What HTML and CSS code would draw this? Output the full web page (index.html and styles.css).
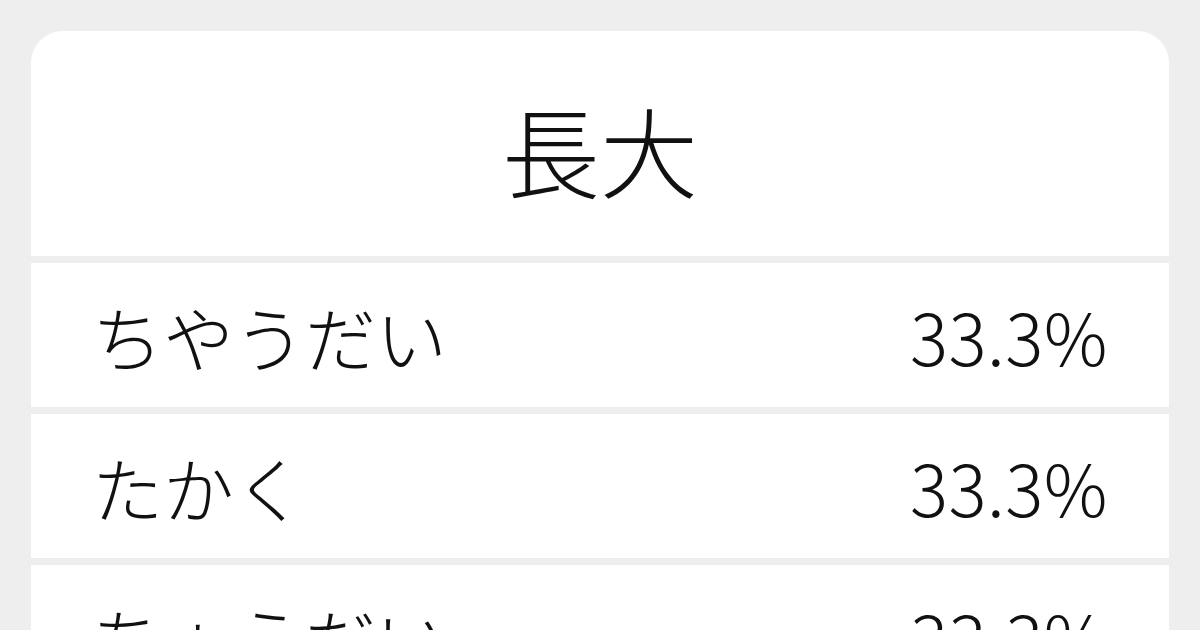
FILE: index.html
```html
<!DOCTYPE html>
<html lang="ja">
<head>
<meta charset="utf-8">
<link rel="stylesheet" href="styles.css">
</head>
<body>
<div class="card">
  <div class="title">長大</div>
  <div class="row"><span class="reading">ちやうだい</span><span class="pct">33.3%</span></div>
  <div class="row"><span class="reading">たかく</span><span class="pct">33.3%</span></div>
  <div class="row"><span class="reading">ちょうだい</span><span class="pct">33.3%</span></div>
</div>
</body>
</html>
```

FILE: styles.css
```css
html, body {
  margin: 0;
  padding: 0;
  background: #eeeeee;
  width: 1200px;
  height: 630px;
  overflow: hidden;
}
body {
  padding: 31px 31px 0 31px;
  box-sizing: border-box;
  font-family: "Noto Sans CJK JP", "Noto Sans", sans-serif;
  font-weight: 300;
  color: #111;
}
.card {
  display: flex;
  flex-direction: column;
  gap: 7px;
  border-radius: 32px 32px 0 0;
  overflow: hidden;
}
.title {
  background: #fff;
  height: 225px;
  display: flex;
  align-items: center;
  justify-content: center;
  font-size: 98px;
  line-height: 1;
  padding-top: 8px;
  box-sizing: border-box;
  flex-shrink: 0;
}
.row {
  background: #fff;
  height: 144px;
  display: flex;
  align-items: center;
  justify-content: space-between;
  padding: 0 61px 0 61px;
  font-size: 71px;
  line-height: 1;
  flex-shrink: 0;
}
.pct {
  letter-spacing: 0.5px;
}
```
